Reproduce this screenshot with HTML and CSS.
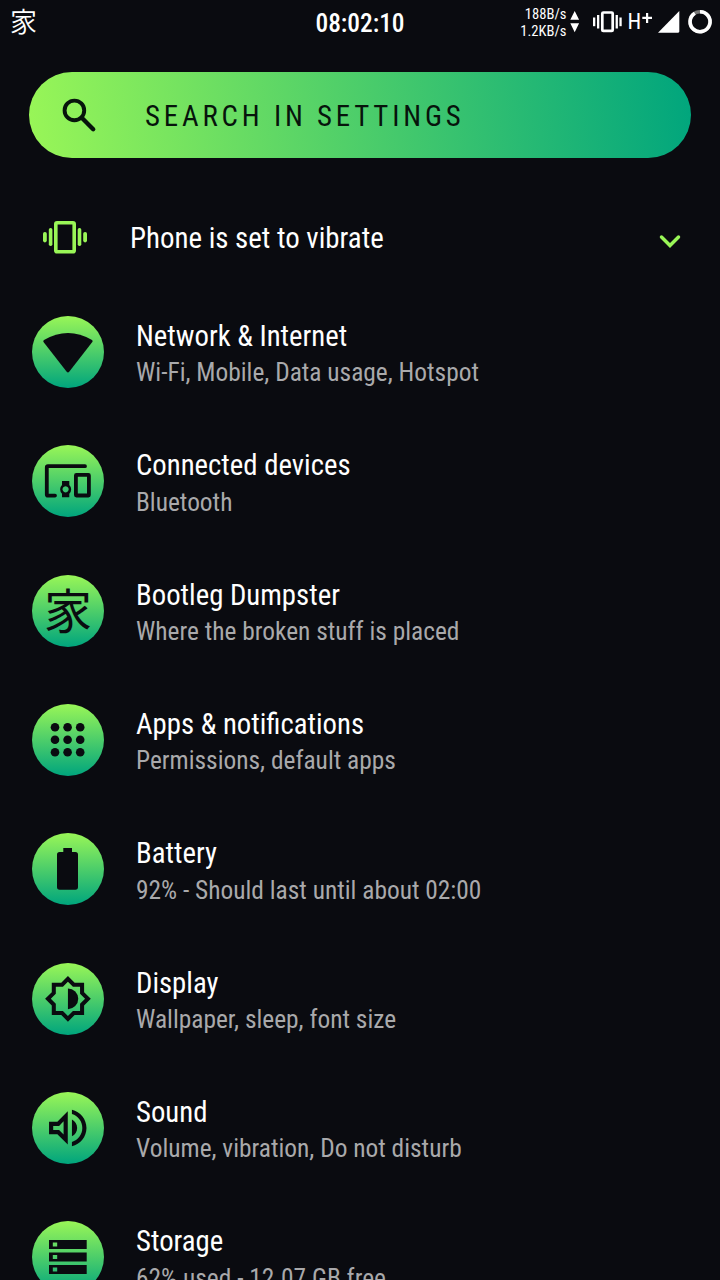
FILE: index.html
```
<!DOCTYPE html>
<html lang="en">
<head>
  <meta charset="UTF-8">
  <meta name="viewport" content="width=device-width, initial-scale=1.0">
  <title>Settings</title>
  <link rel="stylesheet" href="styles.css">
</head>
<body>
  <div class="screen">
    <!-- status bar -->
    <header class="status">
      <span class="status-logo" lang="ja">家</span>
      <span class="clock">08:02:10</span>
      <div class="status-right">
        <div class="traffic"><span>188B/s</span><span>1.2KB/s</span></div>
        <svg width="152" height="44" viewBox="568 0 152 44">
          <g fill="#fff">
            <path d="M574.7 11l4.4 8.7h-8.8zM574.7 32.3l4.4-9.1h-8.8z"/>
            <rect x="593" y="17.5" width="2.3" height="8.7"/>
            <rect x="597" y="15" width="2.3" height="13.5"/>
            <rect x="615.6" y="15" width="2.3" height="13.5"/>
            <rect x="619.4" y="17.5" width="2.3" height="8.7"/>
            <path d="M658 32.7L679.3 11v20.6q0 1.1-1.1 1.1z"/>
            <path d="M642.3 16.7h3.7V13h2.2v3.7h3.8v2.2h-3.8v4H646v-4h-3.7z"/>
          </g>
          <rect x="602.3" y="12.5" width="10.4" height="18.4" rx="1" fill="none" stroke="#fff" stroke-width="2.7"/>
          <text x="627.5" y="29" class="net">H</text>
          <circle cx="700" cy="21.7" r="10" fill="none" stroke="#777" stroke-width="3.6"/>
          <path d="M700 11.7a10 10 0 1 1-5.2 1.5" fill="none" stroke="#fff" stroke-width="3.6"/>
        </svg>
      </div>
    </header>

    <!-- search -->
    <div class="search">
      <svg width="36" height="36" viewBox="61 97 36 36" fill="none" stroke="#07140c">
        <circle cx="74.4" cy="110.4" r="9.8" stroke-width="3.9"/>
        <path d="M82 118l11.2 11.2" stroke-width="4.4" stroke-linecap="round"/>
      </svg>
      <span class="search-text">SEARCH IN SETTINGS</span>
    </div>

    <!-- ringer mode -->
    <div class="ringer">
      <svg width="46" height="34" viewBox="42 220 46 34">
        <g fill="#99f657">
          <rect x="43" y="232" width="3.8" height="10.4" rx="1.8"/>
          <rect x="48.8" y="228" width="3.6" height="18" rx="1.7"/>
          <rect x="77.7" y="228" width="3.6" height="18" rx="1.7"/>
          <rect x="83.2" y="232" width="3.8" height="10.4" rx="1.8"/>
        </g>
        <rect x="55.8" y="222.7" width="18.4" height="29" rx="1.3" fill="none" stroke="#99f657" stroke-width="3.6"/>
      </svg>
      <span class="ringer-text">Phone is set to vibrate</span>
      <svg class="chevron" width="24" height="14" viewBox="657.5 233.5 24 14" fill="none" stroke="#99f657" stroke-width="3.5" stroke-linecap="round">
        <path d="M661 236.5l8.5 8.5 8.5-8.5"/>
      </svg>
    </div>

    <ul class="list">
      <li>
        <div class="icon">
          <svg viewBox="0 0 72 72"><path d="M12 24Q36 10 60 24q1.2.8.3 2.1L37.2 55.7q-1.3 1.5-2.5 0L11.5 26.1q-.8-1.3.5-2.1z"/></svg>
        </div>
        <div class="text"><h2>Network &amp; Internet</h2><p>Wi-Fi, Mobile, Data usage, Hotspot</p></div>
      </li>
      <li>
        <div class="icon">
          <svg viewBox="0 0 72 72">
            <path class="line" d="M53 21.2H16q-1.2 0-1.2 1.2v27q0 1.2 1.2 1.2h7"/>
            <rect class="line" x="43.9" y="29.9" width="13" height="20.6" rx=".5"/>
            <path d="M30 36h7.3v3.9a6.2 6.2 0 0 1 0 8.9v3.5H30v-3.5a6.2 6.2 0 0 1 0-8.9zM33.6 41.2a3.1 3.1 0 1 0 .01 0z" fill-rule="evenodd"/>
          </svg>
        </div>
        <div class="text"><h2>Connected devices</h2><p>Bluetooth</p></div>
      </li>
      <li>
        <div class="icon"><span class="kanji" lang="ja">家</span></div>
        <div class="text"><h2>Bootleg Dumpster</h2><p>Where the broken stuff is placed</p></div>
      </li>
      <li>
        <div class="icon">
          <svg viewBox="0 0 72 72">
            <circle cx="23" cy="23.3" r="4.3"/><circle cx="35.6" cy="23.3" r="4.3"/><circle cx="48.2" cy="23.3" r="4.3"/>
            <circle cx="23" cy="35.8" r="4.3"/><circle cx="35.6" cy="35.8" r="4.3"/><circle cx="48.2" cy="35.8" r="4.3"/>
            <circle cx="23" cy="48.2" r="4.3"/><circle cx="35.6" cy="48.2" r="4.3"/><circle cx="48.2" cy="48.2" r="4.3"/>
          </svg>
        </div>
        <div class="text"><h2>Apps &amp; notifications</h2><p>Permissions, default apps</p></div>
      </li>
      <li>
        <div class="icon">
          <svg viewBox="0 0 72 72"><rect x="31.3" y="15" width="8.7" height="6"/><rect x="25" y="19" width="21" height="37.7" rx="2.6"/></svg>
        </div>
        <div class="text"><h2>Battery</h2><p>92% - Should last until about 02:00</p></div>
      </li>
      <li>
        <div class="icon">
          <svg viewBox="0 0 72 72">
            <g transform="translate(11.7 11.6) scale(2.02)">
              <path fill-rule="evenodd" d="M20 15.31L23.31 12 20 8.69V4h-4.69L12 .69 8.69 4H4v4.69L.69 12 4 15.31V20h4.69L12 23.31 15.31 20H20zM18 14.48V18h-3.52L12 20.48 9.52 18H6v-3.52L3.52 12 6 9.52V6h3.52L12 3.52 14.48 6H18v3.52L20.48 12z"/>
              <path d="M12 6.9a5.1 5.1 0 0 1 0 10.2z"/>
            </g>
          </svg>
        </div>
        <div class="text"><h2>Display</h2><p>Wallpaper, sleep, font size</p></div>
      </li>
      <li>
        <div class="icon">
          <svg viewBox="0 0 72 72">
            <g transform="translate(10.8 11) scale(2.08)">
              <path fill-rule="evenodd" d="M3 9v6h4l5 5V4L7 9zM10 8.83v6.34L7.83 13H5v-2h2.83z"/>
              <path d="M16.5 12c0-1.77-1.02-3.29-2.5-4.03v8.05c1.48-.73 2.5-2.25 2.5-4.02z"/>
              <path d="M14 3.23v2.06c2.89.86 5 3.54 5 6.71s-2.11 5.85-5 6.71v2.06c4.01-.91 7-4.49 7-8.77s-2.99-7.86-7-8.77z"/>
            </g>
          </svg>
        </div>
        <div class="text"><h2>Sound</h2><p>Volume, vibration, Do not disturb</p></div>
      </li>
      <li>
        <div class="icon">
          <svg viewBox="0 0 72 72"><path fill-rule="evenodd" d="M17 19h37.7v9H17zM20.8 21.5v4h4.4v-4zM17 31.5h37.7v9H17zM20.8 34v4h4.4v-4zM17 44h37.7v9H17zM20.8 46.5v4h4.4v-4z"/></svg>
        </div>
        <div class="text"><h2>Storage</h2><p>62% used - 12.07 GB free</p></div>
      </li>
    </ul>
  </div>
</body>
</html>
```
FILE: styles.css
```
* {
  margin: 0;
  padding: 0;
  box-sizing: border-box;
}
body {
  background: #0a0b10;
  color: #fff;
  font-family: "Roboto Condensed", Roboto, sans-serif;
  font-stretch: 75%;
}
.screen {
  width: 720px;
  height: 1280px;
  overflow: hidden;
}
span, h2, p {
  white-space: nowrap;
}
svg {
  display: block;
  flex: none;
}

/* status bar */
.status {
  display: grid;
  grid-template-columns: 1fr auto 1fr;
  align-items: center;
  height: 44px;
}
.status-logo {
  padding: 0 0 3px 10px;
  font: 350 27px/40px "Noto Sans CJK JP", sans-serif;
}
.clock {
  padding-top: 1px;
  font-size: 25.4px;
  font-weight: 500;
}
.status-right {
  display: flex;
  justify-content: flex-end;
  align-items: center;
}
.traffic {
  display: flex;
  flex-direction: column;
  align-items: flex-end;
  padding: 1px 1.5px 0 0;
  font-size: 14.6px;
  line-height: 16.5px;
}
.net {
  fill: #fff;
  font-size: 22px;
  font-weight: 400;
  font-stretch: 85%;
}

/* search */
.search {
  display: flex;
  align-items: center;
  height: 86px;
  margin: 28px 29px 0 29px;
  padding-left: 32px;
  border-radius: 43px;
  background: linear-gradient(82.6deg, #99f657, #00a57d);
}
.search-text {
  margin-left: 48px;
  padding-top: 2px;
  color: #07140c;
  font-size: 28.8px;
  font-weight: 400;
  letter-spacing: 3.85px;
}

/* ringer mode */
.ringer {
  display: flex;
  align-items: center;
  height: 129.3px;
  padding: 29px 38px 0 42px;
}
.ringer-text {
  flex: 1;
  margin-left: 42px;
  padding-top: 2px;
  font-size: 28.9px;
}
.chevron {
  margin-top: 7px;
}

/* settings list */
.list {
  list-style: none;
}
.list li {
  display: flex;
  align-items: center;
  height: 129.33px;
  padding-left: 32px;
}
.icon {
  display: flex;
  justify-content: center;
  align-items: center;
  width: 72px;
  height: 72px;
  border-radius: 50%;
  background: linear-gradient(#99f657, #00a57d);
}
.icon svg {
  width: 72px;
  height: 72px;
  fill: #0a0b10;
}
.icon .line {
  fill: none;
  stroke: #0a0b10;
  stroke-width: 3.8;
  stroke-linecap: round;
}
.kanji {
  padding-bottom: 5px;
  color: #0a0b10;
  font: 400 48px/67px "Noto Sans CJK JP", sans-serif;
}
.text {
  margin-left: 32px;
  padding-top: 5px;
}
.text h2 {
  font-size: 28.75px;
  font-weight: 400;
  line-height: 37.4px;
}
.text p {
  color: #a9a9ab;
  font-size: 25.4px;
  line-height: 35.8px;
}
```
